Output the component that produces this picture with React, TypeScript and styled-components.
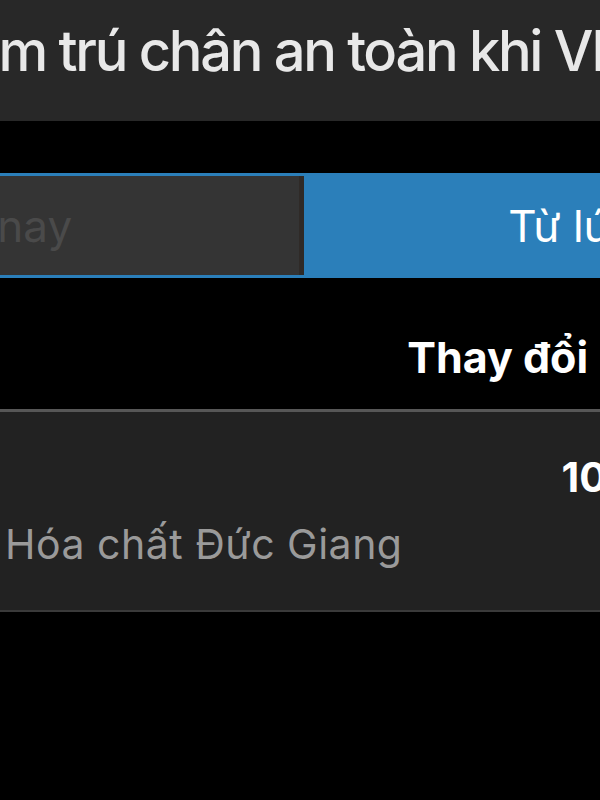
import styled, { createGlobalStyle } from "styled-components";

const GlobalStyle = createGlobalStyle`
  html, body {
    margin: 0;
    padding: 0;
    background: #000;
    overflow: hidden;
  }
  body {
    font-family: "Inter", "Noto Sans", sans-serif;
  }
`;

interface ISegmentProps {
  $active?: boolean;
}

function App() {
  return (
    <>
      <GlobalStyle />
      <Screen>
        <Header>
          <Title>Điểm trú chân an toàn khi VN-Index</Title>
        </Header>

        <Segmented>
          <Segment>Hôm nay</Segment>
          <Segment $active>Từ lúc mua</Segment>
        </Segmented>

        <ColumnHeader>
          <ColumnLabel>Thay đổi %</ColumnLabel>
        </ColumnHeader>

        <StockCard>
          <StockValue>10.5%</StockValue>
          <StockName>Hóa chất Đức Giang</StockName>
        </StockCard>
      </Screen>
    </>
  );
}

export default App;

const Screen = styled.div`
  width: 600px;
  height: 800px;
  overflow: hidden;
  background: #000;
  display: flex;
  flex-direction: column;
`;

const Header = styled.header`
  height: 121px;
  flex-shrink: 0;
  box-sizing: border-box;
  padding-top: 23px;
  background: #282828;
  display: flex;
  overflow: hidden;
`;

const Title = styled.h1`
  margin: 0 0 0 -82px;
  font-size: 56px;
  font-weight: 500;
  line-height: 1;
  letter-spacing: -2.3px;
  color: #e8e8e8;
  white-space: nowrap;
`;

// hai nút chọn khoảng thời gian, bị cắt ở hai bên màn hình
const Segmented = styled.div`
  margin: 52px 0 0 -342px;
  width: 1286px;
  height: 105px;
  flex-shrink: 0;
  box-sizing: border-box;
  border: 3px solid #2b7fba;
  display: flex;
`;

const Segment = styled.div<ISegmentProps>`
  flex: 1;
  display: flex;
  align-items: center;
  justify-content: center;
  font-size: 44px;
  line-height: 1;
  white-space: nowrap;
  background: ${(p) => (p.$active ? "#2b7fba" : "#343434")};
  color: ${(p) => (p.$active ? "#ffffff" : "#4a4a4a")};
  border-right: ${(p) => (p.$active ? "none" : "5px solid #2f2a27")};
`;

const ColumnHeader = styled.div`
  height: 134px;
  flex-shrink: 0;
  box-sizing: border-box;
  padding-top: 58px;
  display: flex;
  justify-content: flex-end;
  border-bottom: 3px solid #575757;
`;

const ColumnLabel = styled.span`
  margin-right: -42px;
  font-size: 43px;
  font-weight: 700;
  line-height: 1;
  color: #ffffff;
  white-space: nowrap;
`;

const StockCard = styled.div`
  height: 200px;
  flex-shrink: 0;
  box-sizing: border-box;
  padding: 45px 0 0 5px;
  background: #222222;
  border-bottom: 2px solid #3a3a3a;
  display: flex;
  flex-direction: column;
`;

const StockValue = styled.span`
  align-self: flex-end;
  margin-right: -87px;
  font-size: 41px;
  font-weight: 700;
  line-height: 1;
  color: #ffffff;
  white-space: nowrap;
`;

const StockName = styled.span`
  margin-top: 26px;
  font-size: 41px;
  font-weight: 400;
  line-height: 1;
  letter-spacing: 0.5px;
  color: #9a9a9a;
  white-space: nowrap;
`;
